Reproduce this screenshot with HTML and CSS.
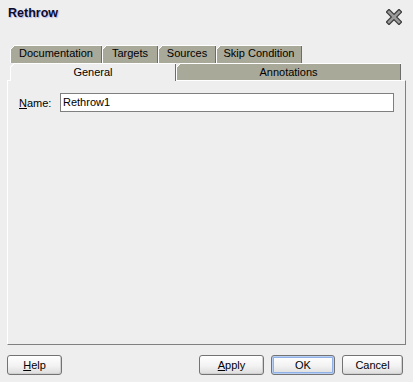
FILE: index.html
```html
<!DOCTYPE html>
<html lang="en">
<head>
    <meta charset="UTF-8">
    <meta name="viewport" content="width=device-width, initial-scale=1.0">
    <title>Rethrow</title>
    <link rel="stylesheet" href="styles.css">
</head>
<body>
    <div id="dialog">
        <div id="tittel">
            <span id="tittelTekst">Rethrow</span>
            <svg id="btnLukk" width="16" height="16" viewBox="0 0 16 16">
                <path d="M3 3 L13 13 M13 3 L3 13" stroke="#3a3a3a" stroke-width="5" stroke-linecap="square"/>
                <path d="M3 3 L13 13 M13 3 L3 13" stroke="#9a9a9a" stroke-width="2.6" stroke-linecap="square"/>
            </svg>
        </div>

        <div class="faneRad" id="rad1">
            <div class="fane" style="width:92px">Documentation</div>
            <div class="fane" style="width:56px">Targets</div>
            <div class="fane" style="width:58px">Sources</div>
            <div class="fane" style="width:86px">Skip Condition</div>
        </div>
        <div class="faneRad" id="rad2">
            <div class="fane valgt" style="width:166px">General</div>
            <div class="fane" style="width:225px">Annotations</div>
        </div>

        <div id="panel">
            <div class="felt">
                <label class="etikett"><u>N</u>ame:</label>
                <div class="inp">Rethrow1</div>
            </div>
        </div>

        <div id="knapper">
            <button class="knapp" id="btnHjelp"><u>H</u>elp</button>
            <div class="hoyre">
                <button class="knapp" id="btnApply"><u>A</u>pply</button>
                <button class="knapp fokus" id="btnOk">OK</button>
                <button class="knapp" id="btnCancel">Cancel</button>
            </div>
        </div>
    </div>
</body>
</html>
```

FILE: styles.css
```css
html, body {
    margin: 0;
    padding: 0;
}
body {
    background: #eeeeee;
    font-family: "Liberation Sans", Arial, sans-serif;
    font-size: 11px;
    color: #000;
}
#dialog {
    width: 413px;
    height: 382px;
    display: flex;
    flex-direction: column;
}
#tittel {
    height: 45px;
    display: flex;
    justify-content: space-between;
    align-items: flex-start;
    padding: 0 11px 0 8px;
    box-sizing: border-box;
}
#tittelTekst {
    font-weight: bold;
    font-size: 12.5px;
    line-height: 15px;
    margin-top: 6px;
    color: #0c0c2a;
    text-shadow: 1px 1px 1px #b4b4f0;
}
#btnLukk {
    margin-top: 9px;
}
.faneRad {
    display: flex;
    padding-left: 10px;
}
#rad1 {
    height: 18px;
}
#rad2 {
    height: 17px;
}
.fane {
    box-sizing: border-box;
    height: 100%;
    text-align: center;
    line-height: 17px;
    background: linear-gradient(135deg, transparent 0 2.8px, #ffffff 2.8px 4.2px, transparent 4.2px) no-repeat 0 0 / 6px 6px, #a9a999;
    box-shadow: inset 1px 1px 0 #ffffff, inset -1px 0 0 #6c6c6c;
    clip-path: polygon(0 4px, 4px 0, 100% 0, 100% 100%, 0 100%);
}
#rad2 .fane {
    line-height: 18px;
}
.fane.valgt {
    background: linear-gradient(135deg, transparent 0 2.8px, #ffffff 2.8px 4.2px, transparent 4.2px) no-repeat 0 0 / 6px 6px, #eeeeee;
    position: relative;
    z-index: 1;
    height: 18px;
}
#panel {
    flex: 1;
    margin: 0 7px;
    border-top: 1px solid #ffffff;
    border-left: 1px solid #ffffff;
    border-right: 1px solid #808080;
    border-bottom: 1px solid #808080;
    padding: 12px 11px 0 11px;
}
.felt {
    display: flex;
    align-items: center;
}
.etikett {
    width: 41px;
}
.inp {
    flex: 1;
    height: 19px;
    box-sizing: border-box;
    border: 1px solid #7f7f7f;
    background: #ffffff;
    line-height: 17px;
    padding-left: 2px;
}
#knapper {
    display: flex;
    justify-content: space-between;
    padding: 10px 10px 7px 7px;
}
.hoyre {
    display: flex;
    gap: 7px;
}
.knapp {
    height: 20px;
    font-family: "Liberation Sans", Arial, sans-serif;
    font-size: 11px;
    color: #000;
    border: 1px solid #737373;
    border-radius: 3px;
    background: linear-gradient(#ffffff, #f2f2f2 55%, #dcdcdc);
    box-shadow: inset -1px -1px 0 #d0d0d0;
    padding: 0;
}
#btnHjelp {
    width: 55px;
}
#btnApply {
    width: 65px;
}
#btnOk {
    width: 64px;
}
#btnCancel {
    width: 61px;
}
.knapp.fokus {
    box-shadow: inset 0 0 0 1px #b8cff2, inset 0 0 0 2px #8fb1e8;
}
```
